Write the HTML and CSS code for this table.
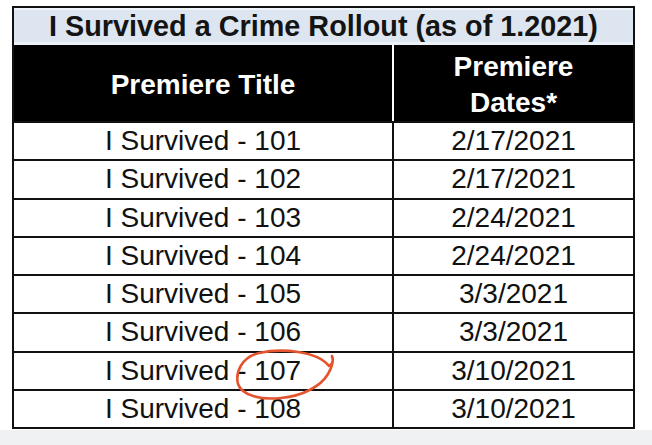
FILE: index.html
```html
<!DOCTYPE html>
<html lang="en">
<head>
<meta charset="utf-8">
<title>I Survived a Crime Rollout</title>
<link rel="stylesheet" href="styles.css">
</head>
<body>
<div class="page">
  <table class="rollout">
    <colgroup><col class="c1"><col class="c2"></colgroup>
    <tr><td class="title" colspan="2">I Survived a Crime Rollout (as of 1.2021)</td></tr>
    <tr class="head">
      <th class="h1">Premiere Title</th>
      <th class="h2">Premiere<br>Dates*</th>
    </tr>
    <tr><td class="name">I Survived - 101</td><td>2/17/2021</td></tr>
    <tr><td class="name">I Survived - 102</td><td>2/17/2021</td></tr>
    <tr><td class="name">I Survived - 103</td><td>2/24/2021</td></tr>
    <tr><td class="name">I Survived - 104</td><td>2/24/2021</td></tr>
    <tr><td class="name">I Survived - 105</td><td>3/3/2021</td></tr>
    <tr><td class="name">I Survived - 106</td><td>3/3/2021</td></tr>
    <tr><td class="name">I Survived - 107</td><td>3/10/2021</td></tr>
    <tr><td class="name">I Survived - 108</td><td>3/10/2021</td></tr>
  </table>
  <svg class="scribble" width="652" height="445" viewBox="0 0 652 445" aria-hidden="true">
    <path d="M332 356 C334 360 332 364 329 366 C317 351 282 348 259 353 C242 357 235 372 238 384 C242 396 262 400 281 398 C303 396 321 386 328 374 C332 367 334 361 332 357" fill="none" stroke="#e4552f" stroke-width="2.6" stroke-linecap="round" stroke-linejoin="round"/>
  </svg>
</div>
</body>
</html>
```

FILE: styles.css
```css
html, body {
  margin: 0;
  padding: 0;
}
body {
  background: #f0f1f3;
  font-family: "Liberation Sans", Arial, Helvetica, sans-serif;
  color: #111;
}
.page {
  position: relative;
  box-sizing: border-box;
  height: 430px;
  width: 652px;
  background: #fff;
  padding: 6px 0 0 12px;
}
.rollout {
  border-collapse: separate;
  border-spacing: 0;
  border: 2px solid #111;
  width: 623px;
  table-layout: fixed;
  font-size: 28px;
}
.c1 { width: 380px; }
.c2 { width: 239px; }
.rollout td, .rollout th {
  padding: 0;
  text-align: center;
  white-space: nowrap;
}
.title {
  background: #dde6f0;
  font-weight: bold;
  font-size: 28.8px;
  line-height: 37px;
  box-shadow: inset 0 2px 0 #eef3f9, inset 0 -3px 0 #eaf0f7;
  color: #141414;
}
.rollout .head th {
  background: #000;
  color: #fff;
  font-weight: bold;
  line-height: 36px;
  padding: 4px 0 0;
}
.head .h1 {
  border-right: 2px solid #fff;
}
.rollout td.name,
.rollout td.name + td {
  border-top: 2px solid #111;
  line-height: 36.25px;
}
.rollout td.name {
  border-right: 2px solid #111;
}
.scribble {
  position: absolute;
  left: 0;
  top: 0;
  pointer-events: none;
}
```
